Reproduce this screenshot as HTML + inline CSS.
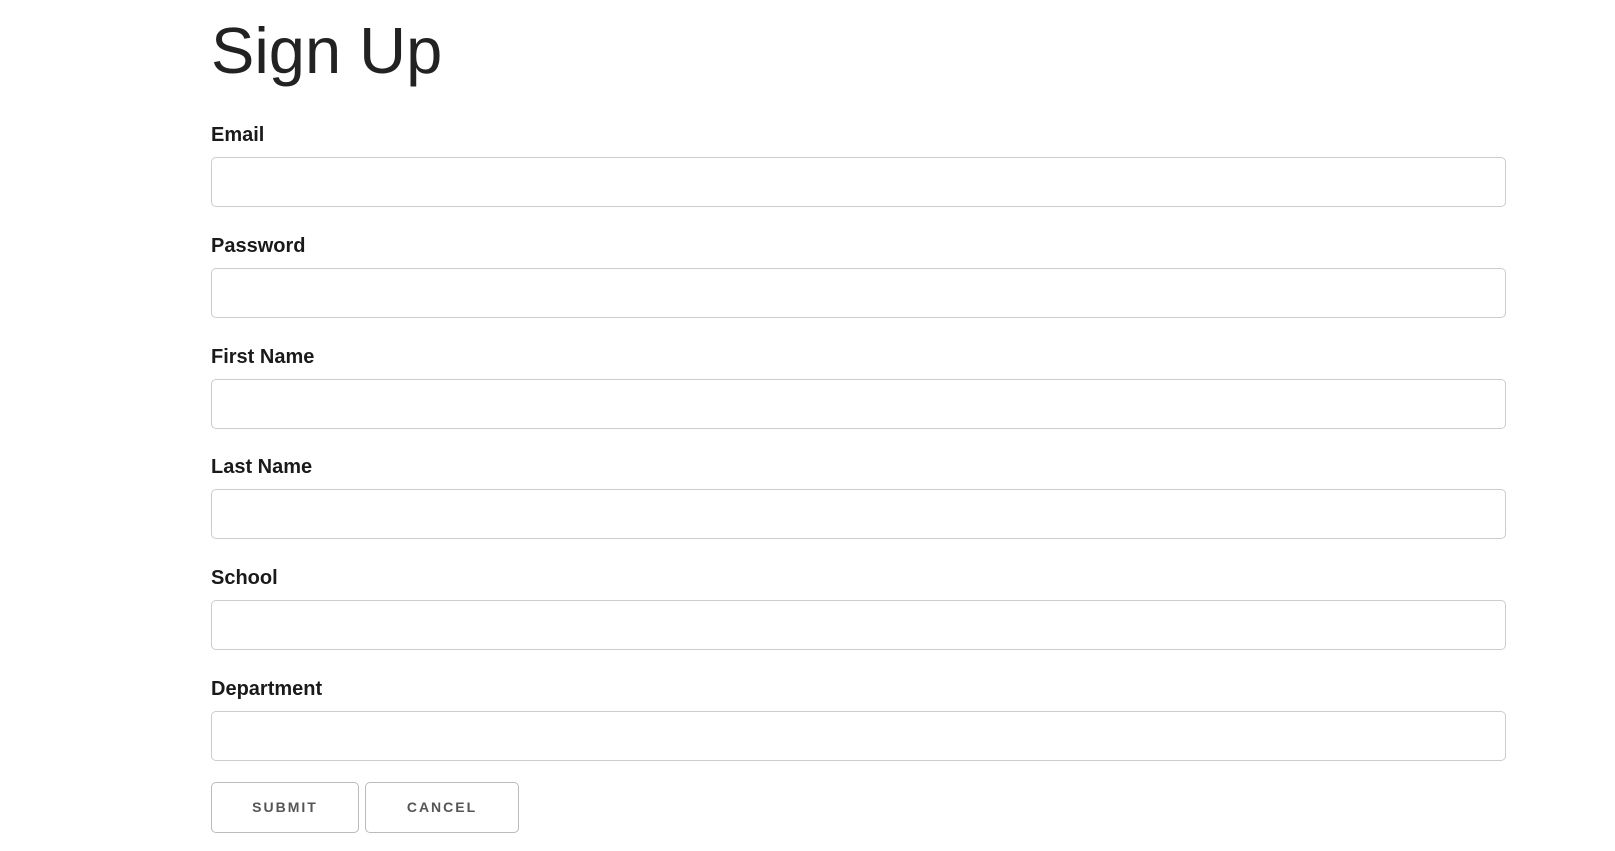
<!DOCTYPE html>
<html><head><style>
body{margin:0;background:#fff;font-family:"Liberation Sans",Arial,sans-serif;color:#222;}
.wrap{position:absolute;left:211px;top:0;width:1296px;}
h1{position:absolute;left:0;top:11px;margin:0;font-size:65px;font-weight:normal;line-height:80px;color:#222;}
.f{position:absolute;left:0;width:1296px;}
.f label{position:absolute;left:0;top:-33px;font-weight:bold;font-size:20px;color:#1a1a1a;}
.f .in{position:absolute;left:0;top:0;width:1293px;height:48px;border:1px solid #ccc;border-radius:5px;}
.btn{position:absolute;top:782px;height:49px;border:1px solid #bbb;border-radius:5px;font-weight:bold;font-size:14px;letter-spacing:2px;color:#555;text-align:center;line-height:49px;}
</style></head><body>
<div class="wrap">
<h1>Sign Up</h1>
<div class="f" style="top:157px"><label>Email</label><div class="in"></div></div>
<div class="f" style="top:268px"><label>Password</label><div class="in"></div></div>
<div class="f" style="top:379px"><label>First Name</label><div class="in"></div></div>
<div class="f" style="top:489px"><label>Last Name</label><div class="in"></div></div>
<div class="f" style="top:600px"><label>School</label><div class="in"></div></div>
<div class="f" style="top:711px"><label>Department</label><div class="in"></div></div>
<div class="btn" style="left:0;width:146px">SUBMIT</div>
<div class="btn" style="left:154px;width:152px">CANCEL</div>
</div>
</body></html>
